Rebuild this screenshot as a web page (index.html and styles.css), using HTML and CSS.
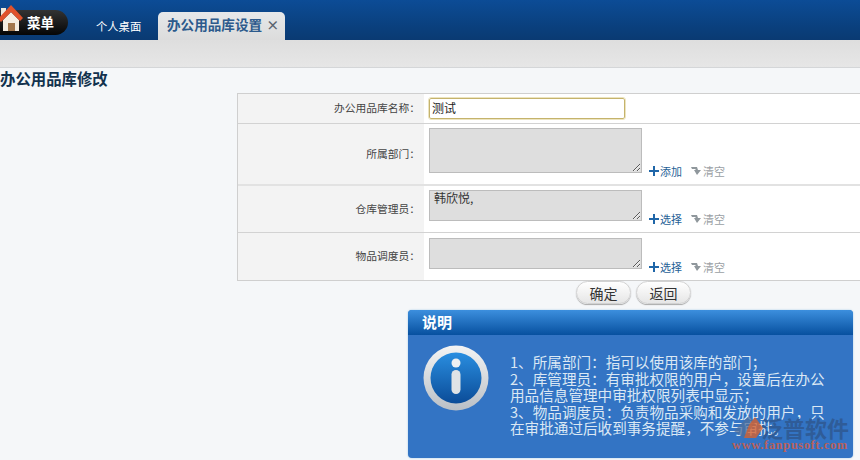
FILE: index.html

```html
<!DOCTYPE html>
<html lang="zh-CN">
<head>
  <meta charset="UTF-8">
  <title>办公用品库修改</title>
  <link rel="stylesheet" href="styles.css">
</head>
<body>
  <div class="topbar">
    <div class="menu-btn">
      <svg class="home-icon" width="23" height="27" viewBox="0 0 23 27">
        <rect x="1" y="3" width="5" height="9" fill="#efe9dc"/>
        <path d="M3 15 L11 7 L19 15 V26 H3 Z" fill="#f5eee2"/>
        <path d="M-2 14 L11 0 L23 13 L20 16 L11 7 L1 17 Z" fill="#e0522b"/>
        <rect x="8" y="18" width="7" height="8" fill="#a3784e"/>
      </svg>
      <span>菜单</span>
    </div>
    <div class="tab-plain">个人桌面</div>
    <div class="tab-active">办公用品库设置<span class="tab-close">×</span></div>
  </div>
  <div class="toolbar"></div>

  <h1 class="page-title">办公用品库修改</h1>

  <div class="form-wrap">
    <div class="form-table">
      <div class="row row-name">
        <div class="label">办公用品库名称：</div>
        <div class="field"><input class="name-input" value="测试"></div>
      </div>
      <div class="row row-dept">
        <div class="label">所属部门：</div>
        <div class="field">
          <textarea class="area area-tall"></textarea>
          <a class="act act-add"><svg width="10" height="10" viewBox="0 0 10 10"><path d="M5 0V10M0 5H10" stroke="#1f66a8" stroke-width="2"/></svg>添加</a>
          <a class="act act-clear"><svg width="11" height="10" viewBox="0 0 11 10"><path d="M0 1H6L7 4H10L6 9L3 4H5L4 3H1Z" fill="#8f979c"/></svg>清空</a>
        </div>
      </div>
      <div class="row row-user">
        <div class="label">仓库管理员：</div>
        <div class="field">
          <textarea class="area">韩欣悦,</textarea>
          <a class="act act-add"><svg width="10" height="10" viewBox="0 0 10 10"><path d="M5 0V10M0 5H10" stroke="#1f66a8" stroke-width="2"/></svg>选择</a>
          <a class="act act-clear"><svg width="11" height="10" viewBox="0 0 11 10"><path d="M0 1H6L7 4H10L6 9L3 4H5L4 3H1Z" fill="#8f979c"/></svg>清空</a>
        </div>
      </div>
      <div class="row row-last">
        <div class="label">物品调度员：</div>
        <div class="field">
          <textarea class="area"></textarea>
          <a class="act act-add"><svg width="10" height="10" viewBox="0 0 10 10"><path d="M5 0V10M0 5H10" stroke="#1f66a8" stroke-width="2"/></svg>选择</a>
          <a class="act act-clear"><svg width="11" height="10" viewBox="0 0 11 10"><path d="M0 1H6L7 4H10L6 9L3 4H5L4 3H1Z" fill="#8f979c"/></svg>清空</a>
        </div>
      </div>
    </div>
    <div class="buttons">
      <button class="btn">确定</button>
      <button class="btn">返回</button>
    </div>
    <div class="notice">
      <div class="notice-head">说明</div>
      <div class="notice-body">
        <svg class="info-icon" width="66" height="66" viewBox="0 0 66 66">
          <defs>
            <linearGradient id="ring" x1="0" y1="0" x2="0" y2="1">
              <stop offset="0" stop-color="#f4f4f4"/>
              <stop offset="1" stop-color="#b9bfc6"/>
            </linearGradient>
            <linearGradient id="disc" x1="0" y1="0" x2="0" y2="1">
              <stop offset="0" stop-color="#2a8ee0"/>
              <stop offset="1" stop-color="#0b4c98"/>
            </linearGradient>
          </defs>
          <circle cx="33" cy="33" r="32.5" fill="url(#ring)"/>
          <circle cx="33" cy="33" r="25.5" fill="url(#disc)"/>
          <circle cx="33" cy="18" r="4.5" fill="#eef0f2"/>
          <rect x="28.5" y="25" width="9" height="24" rx="4.5" fill="#dfe3e6"/>
        </svg>
        <p class="notice-text">
          1、所属部门：指可以使用该库的部门；<br>
          2、库管理员：有审批权限的用户，设置后在办公<br>
          用品信息管理中审批权限列表中显示；<br>
          3、物品调度员：负责物品采购和发放的用户，只<br>
          在审批通过后收到事务提醒，不参与审批。
        </p>
      </div>
    </div>
  </div>

  <div class="watermark">
    <svg class="wm-logo" width="30" height="24" viewBox="0 0 30 24">
      <path d="M0 16 L15 1 L21 8 L10 23 Z" fill="#4f6f9c" opacity=".75"/>
      <path d="M10 23 L15 10 L21 2 L29 13 L22 23 Z" fill="#d4622f" opacity=".8"/>
    </svg>
    <div class="wm-name">泛普软件</div>
    <div class="wm-url">www.fanpusoft.com</div>
  </div>
</body>
</html>
```

FILE: styles.css

```css
body {
  margin: 0;
  height: 460px;
  overflow: hidden;
  position: relative;
  background: #f5f7f9;
  font-family: "Noto Sans CJK SC", "Liberation Sans", sans-serif;
  color: #333;
}

.topbar {
  height: 40px;
  display: flex;
  align-items: flex-end;
  background: linear-gradient(to bottom, #0c4c96, #0a3f7c 70%, #0a3a72);
}

.menu-btn {
  width: 68px;
  height: 25px;
  margin-bottom: 5px;
  display: flex;
  align-items: center;
  background: linear-gradient(to bottom, #333, #050505);
  border-radius: 0 13px 13px 0;
  color: #fff;
  font-size: 13.5px;
  font-weight: bold;
  position: relative;
}

.menu-btn span {
  margin: 0 0 2px 27px;
}

.home-icon {
  position: absolute;
  left: 0;
  top: -5px;
}

.tab-plain {
  width: 90px;
  height: 26px;
  line-height: 25px;
  padding-left: 28px;
  box-sizing: border-box;
  color: #fff;
  font-size: 11.3px;
}

.tab-active {
  width: 127px;
  height: 28px;
  line-height: 25px;
  background: linear-gradient(to bottom, #e6e8ea, #dcdcdc);
  border-radius: 5px 5px 0 0;
  color: #2c5a8c;
  font-size: 13.6px;
  font-weight: bold;
  padding-left: 9px;
  box-sizing: border-box;
  white-space: nowrap;
}

.tab-close {
  margin-left: 4px;
  font-size: 13px;
  color: #5a6470;
}

.toolbar {
  height: 27px;
  background: linear-gradient(to bottom, #dedede, #e6e6e6);
  border-bottom: 1px solid #d4d6d8;
}

.page-title {
  margin: 0;
  height: 25px;
  line-height: 21px;
  font-size: 15.4px;
  font-weight: bold;
  color: #12324e;
}

.form-wrap {
  margin-left: 237px;
}

.form-table {
  border: 1px solid #cfcfcf;
  border-right: none;
  background: #fff;
}

.row {
  display: flex;
  border-bottom: 1px solid #d2d2d2;
}

.row-name { height: 29px; }
.row-dept { height: 60px; border-bottom: 2px solid #e2e2e2; }
.row-user { height: 46px; }
.row-last { height: 47px; border-bottom: none; }

.label {
  width: 186px;
  flex: none;
  background: #f3f3f3;
  display: flex;
  align-items: center;
  justify-content: flex-end;
  padding: 0 4px 2px 0;
  box-sizing: border-box;
  font-size: 10.75px;
  color: #444;
}

.field {
  flex: 1;
  display: flex;
  align-items: flex-end;
  padding-left: 5px;
}

.row-name .field {
  align-items: center;
}

.name-input {
  width: 196px;
  height: 21px;
  padding: 0 2px 2px;
  box-sizing: border-box;
  border: 1px solid #c5b36c;
  border-radius: 2px;
  background: #fff;
  font-family: inherit;
  font-size: 12px;
  color: #222;
  outline: 1px solid #ece4c0;
}

.area {
  width: 213px;
  height: 31px;
  margin: 0 0 11px;
  padding: 0 4px;
  box-sizing: border-box;
  border: 1px solid #bcbcbc;
  background: #dedede;
  font-family: inherit;
  font-size: 12px;
  line-height: 14px;
  color: #333;
  display: block;
}

.area-tall {
  height: 45px;
}

.act {
  display: flex;
  align-items: center;
  font-size: 11px;
  line-height: 14px;
  margin-bottom: 6px;
}

.act svg {
  margin-right: 1px;
}

.act-add {
  margin-left: 7px;
  color: #1f5f96;
}

.act-clear {
  margin-left: 9px;
  color: #9aa0a4;
}

.buttons {
  height: 29px;
  display: flex;
  align-items: flex-start;
  gap: 5px;
  padding-left: 339px;
}

.btn {
  width: 55px;
  height: 23px;
  padding: 0;
  border: 1px solid #d2d2d2;
  border-radius: 12px;
  background: linear-gradient(to bottom, #fff, #e6e6e6);
  box-shadow: 0 1px 1px #aaa;
  font-family: inherit;
  font-size: 14px;
  line-height: 20px;
  color: #333;
}

.notice {
  width: 445px;
  height: 148px;
  margin-left: 171px;
  border-radius: 4px;
  background: #3374c4;
  overflow: hidden;
  box-shadow: 0 0 2px #9cc4e6;
}

.notice-head {
  height: 25px;
  line-height: 24px;
  padding-left: 14px;
  background: linear-gradient(to bottom, #3c8fde, #07509f);
  color: #fff;
  font-size: 15px;
  font-weight: bold;
}

.notice-body {
  display: flex;
  padding: 10px 0 0 15px;
}

.info-icon {
  flex: none;
}

.notice-text {
  margin: 9px 0 0 21px;
  font-size: 14.6px;
  line-height: 16.6px;
  color: #dbe8f4;
  white-space: nowrap;
}

.watermark {
  position: absolute;
  left: 732px;
  top: 414px;
  width: 120px;
}

.wm-logo {
  position: absolute;
  left: 2px;
  top: 1px;
}

.wm-name {
  margin-left: 29px;
  font-size: 22px;
  line-height: 26px;
  font-weight: bold;
  white-space: nowrap;
  color: #2f5c98;
}

.wm-url {
  font-family: "Liberation Serif", serif;
  font-size: 12.5px;
  font-weight: bold;
  line-height: 11px;
  letter-spacing: 0.6px;
  color: #b8605a;
  white-space: nowrap;
}
```
